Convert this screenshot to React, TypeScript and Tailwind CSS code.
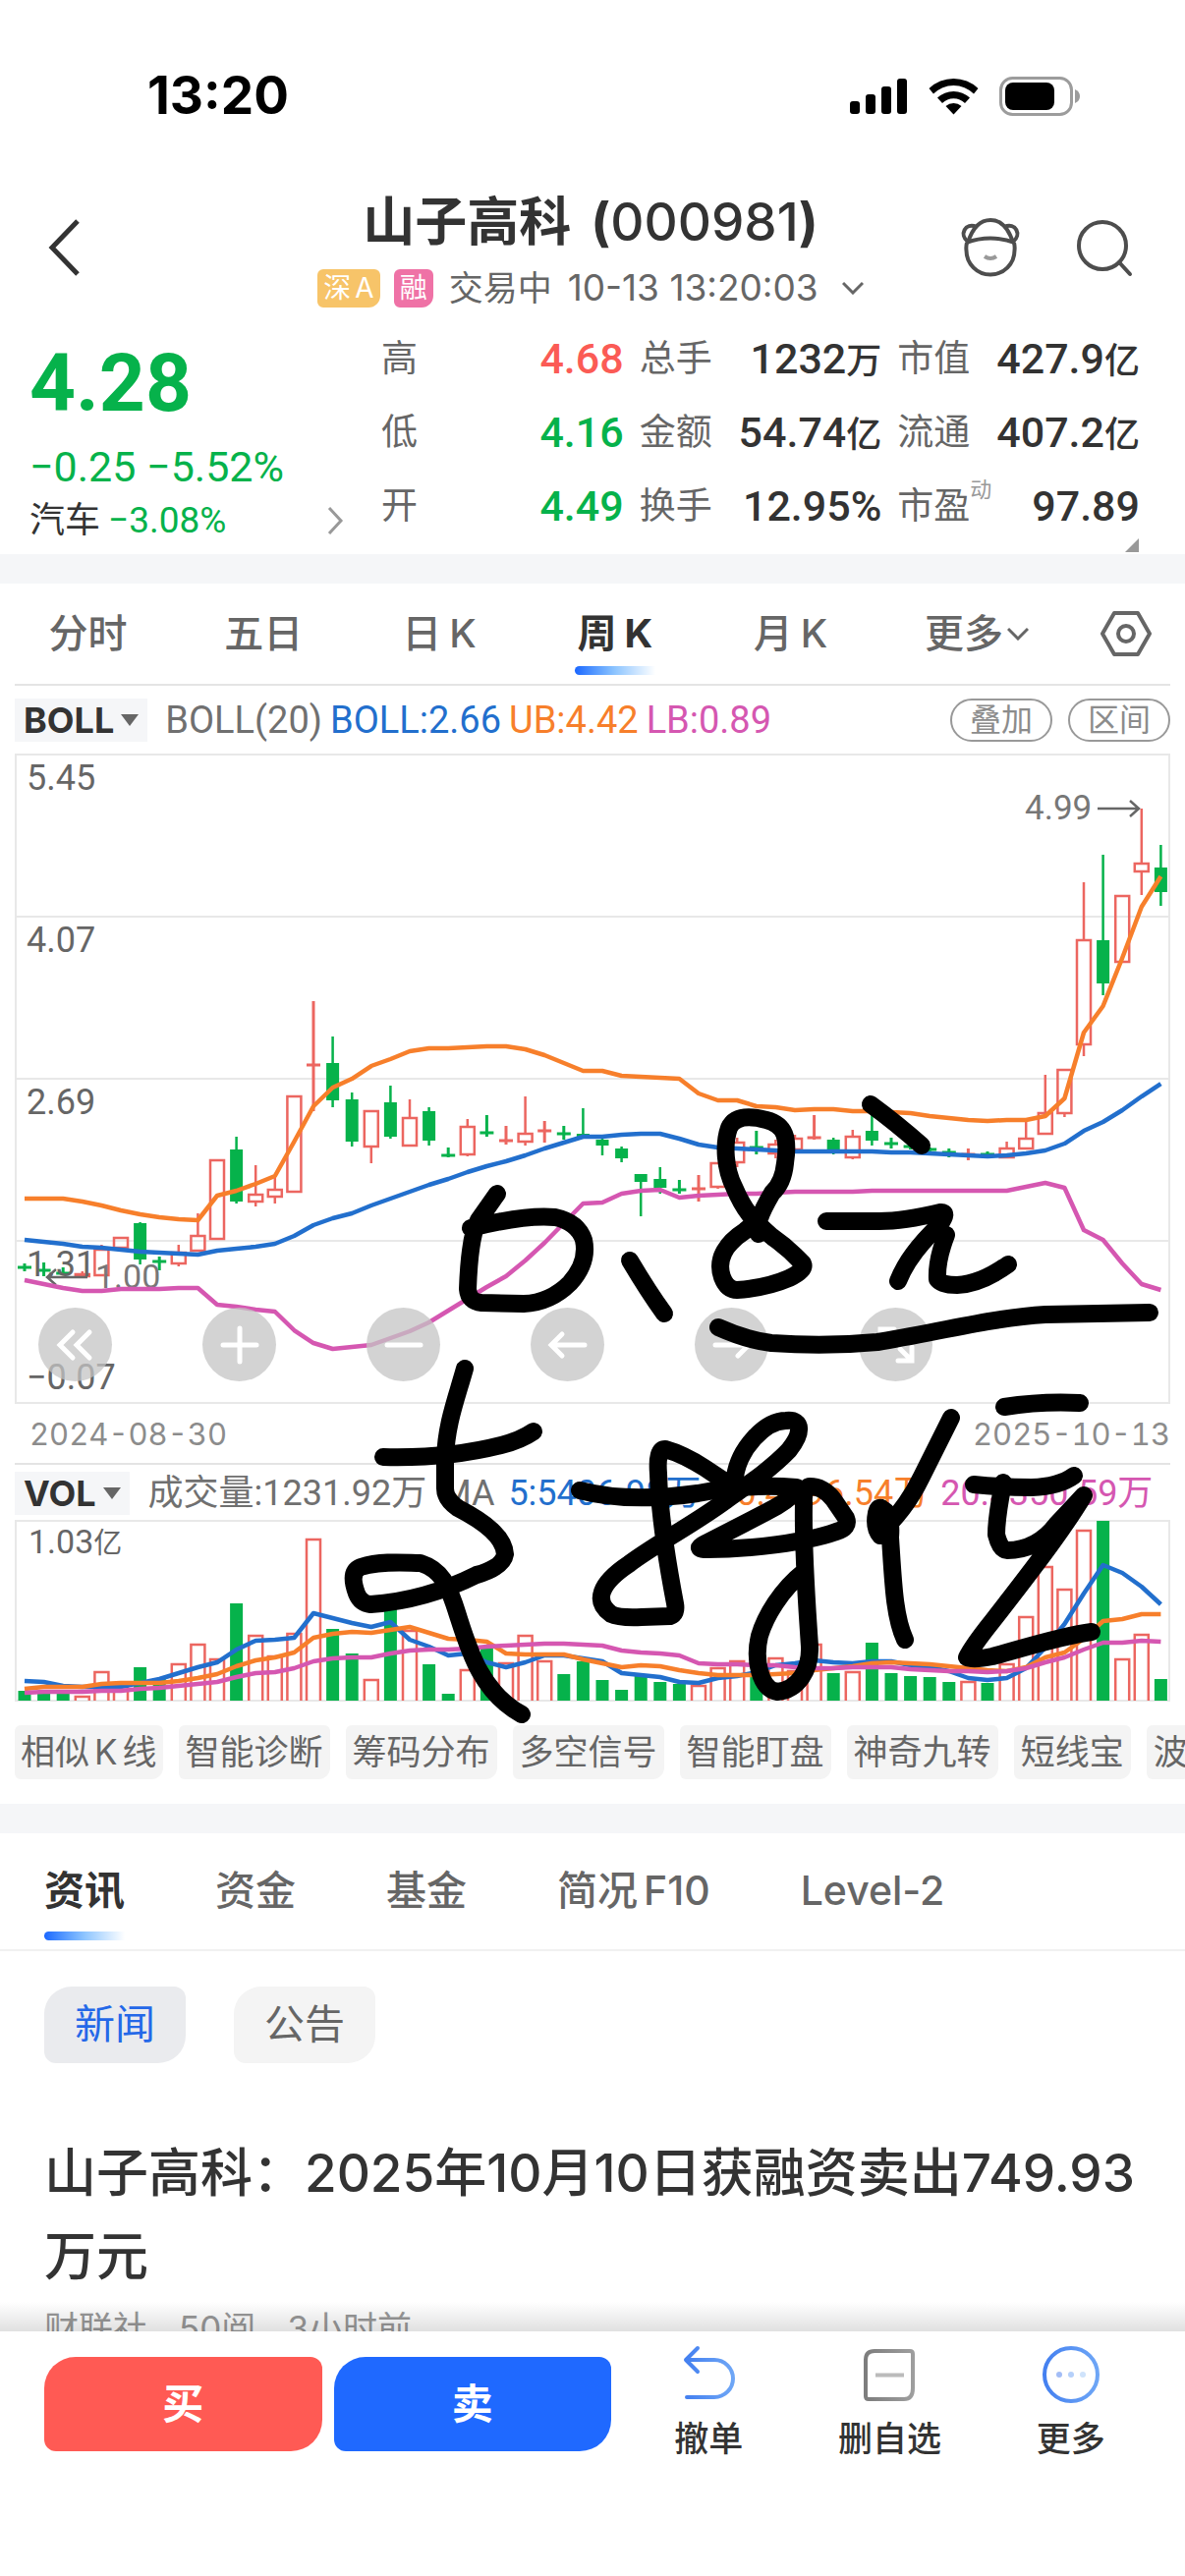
import type { ReactNode } from "react";

type Tone = "up" | "down";

// [tone, high, bodyTop, bodyBottom, low]; equal body values draw a doji
type Candle = [Tone, number, number, number, number];

const UP = "#ec6660";
const DOWN = "#06b24b";
const BLUE = "#226fcd";
const ORANGE = "#f77f2b";
const PINK = "#d557b1";

const FONT = "font-[Roboto,'Noto_Sans_CJK_SC',sans-serif]";
const FONT_WIDE = "font-[Inter,'Noto_Sans_CJK_SC',sans-serif]";

const candles: Candle[] = [
  ["down", 1286, 1290, 1290, 1294],
  ["down", 1285, 1293, 1293, 1299],
  ["down", 1290, 1296, 1296, 1298],
  ["up", 1294, 1297, 1299, 1299],
  ["up", 1267, 1272, 1298, 1298],
  ["up", 1260, 1260, 1270, 1270],
  ["down", 1244, 1245, 1282, 1287],
  ["down", 1279, 1284, 1284, 1293],
  ["up", 1267, 1275, 1286, 1289],
  ["up", 1235, 1258, 1273, 1273],
  ["up", 1181, 1181, 1261, 1261],
  ["down", 1157, 1170, 1223, 1225],
  ["up", 1186, 1216, 1223, 1228],
  ["up", 1198, 1211, 1218, 1225],
  ["up", 1116, 1116, 1213, 1213],
  ["up", 1019, 1084, 1084, 1131],
  ["down", 1055, 1082, 1120, 1127],
  ["down", 1112, 1119, 1162, 1167],
  ["up", 1131, 1131, 1167, 1184],
  ["down", 1105, 1122, 1157, 1159],
  ["up", 1119, 1138, 1166, 1166],
  ["down", 1127, 1131, 1161, 1166],
  ["down", 1168, 1176, 1176, 1178],
  ["up", 1139, 1147, 1175, 1177],
  ["down", 1135, 1153, 1153, 1157],
  ["up", 1146, 1161, 1161, 1165],
  ["up", 1116, 1154, 1162, 1166],
  ["up", 1141, 1151, 1151, 1163],
  ["down", 1146, 1154, 1154, 1160],
  ["down", 1128, 1154, 1158, 1158],
  ["down", 1159, 1160, 1166, 1176],
  ["down", 1167, 1169, 1179, 1183],
  ["down", 1195, 1195, 1203, 1238],
  ["down", 1188, 1200, 1209, 1215],
  ["down", 1201, 1211, 1211, 1215],
  ["up", 1196, 1210, 1210, 1223],
  ["up", 1184, 1184, 1208, 1210],
  ["up", 1158, 1163, 1183, 1188],
  ["down", 1151, 1168, 1168, 1175],
  ["up", 1160, 1165, 1174, 1179],
  ["up", 1155, 1159, 1170, 1170],
  ["up", 1135, 1158, 1158, 1160],
  ["down", 1158, 1160, 1170, 1175],
  ["up", 1150, 1157, 1178, 1180],
  ["down", 1135, 1151, 1161, 1166],
  ["down", 1158, 1164, 1164, 1169],
  ["down", 1165, 1167, 1167, 1170],
  ["down", 1168, 1170, 1170, 1173],
  ["down", 1169, 1173, 1173, 1178],
  ["up", 1169, 1175, 1175, 1181],
  ["down", 1172, 1175, 1175, 1179],
  ["up", 1162, 1169, 1178, 1178],
  ["up", 1142, 1159, 1169, 1169],
  ["up", 1094, 1133, 1154, 1154],
  ["up", 1089, 1089, 1133, 1137],
  ["up", 898, 957, 1063, 1075],
  ["down", 870, 957, 1001, 1013],
  ["up", 912, 912, 979, 979],
  ["up", 823, 879, 887, 911],
  ["down", 860, 883, 908, 922],
];

const upperBand = [
  1220, 1220, 1220, 1223, 1227, 1232, 1236, 1239, 1241, 1242, 1217, 1212, 1205, 1197, 1162, 1126, 1107,
  1098, 1085, 1078, 1070, 1067, 1067, 1066, 1065, 1065, 1068, 1074, 1082, 1090, 1090, 1095, 1096, 1097,
  1098, 1113, 1120, 1120, 1126, 1127, 1130, 1129, 1129, 1131, 1131, 1132, 1133, 1136, 1138, 1140, 1141,
  1140, 1140, 1136, 1118, 1051, 1024, 975, 923, 892,
];

const midBand = [
  1262, 1264, 1266, 1269, 1270, 1272, 1274, 1275, 1276, 1277, 1273, 1271, 1269, 1266, 1258, 1247, 1240,
  1235, 1227, 1220, 1213, 1206, 1200, 1193, 1187, 1182, 1176, 1169, 1163, 1157, 1157, 1155, 1154, 1154,
  1159, 1165, 1168, 1169, 1170, 1171, 1172, 1172, 1172, 1172, 1172, 1173, 1173, 1174, 1175, 1176, 1177,
  1176, 1174, 1171, 1164, 1151, 1142, 1130, 1116, 1103,
];

const lowerBand = [
  1303, 1307, 1311, 1314, 1314, 1312, 1312, 1312, 1311, 1311, 1328, 1330, 1333, 1335, 1354, 1367, 1373,
  1371, 1369, 1362, 1355, 1346, 1334, 1322, 1310, 1299, 1283, 1265, 1245, 1225, 1224, 1215, 1212, 1211,
  1219, 1217, 1216, 1215, 1215, 1214, 1213, 1213, 1213, 1213, 1212, 1212, 1212, 1212, 1212, 1212, 1212,
  1212, 1208, 1204, 1209, 1252, 1262, 1286, 1307, 1313,
];

const volumeTops = [
  1721, 1723, 1723, 1727, 1702, 1717, 1697, 1708, 1694, 1674, 1689, 1632, 1665, 1686, 1663, 1567, 1658,
  1683, 1710, 1638, 1660, 1694, 1724, 1700, 1678, 1693, 1665, 1691, 1704, 1691, 1710, 1720, 1706, 1712,
  1714, 1716, 1698, 1691, 1703, 1688, 1701, 1674, 1703, 1702, 1672, 1703, 1706, 1707, 1712, 1712, 1713,
  1694, 1646, 1595, 1618, 1558, 1548, 1689, 1664, 1709,
];

const ma5 = [
  1711, 1712, 1716, 1717, 1717, 1717, 1713, 1709, 1703, 1697, 1692, 1679, 1670, 1669, 1667, 1642, 1647,
  1652, 1656, 1651, 1669, 1676, 1685, 1683, 1692, 1697, 1692, 1685, 1685, 1688, 1691, 1703, 1705, 1707,
  1712, 1713, 1708, 1706, 1702, 1695, 1693, 1690, 1692, 1693, 1691, 1691, 1695, 1697, 1701, 1708, 1710,
  1708, 1698, 1677, 1653, 1622, 1593, 1601, 1615, 1633,
];

const ma10 = [
  1719, 1717, 1717, 1717, 1714, 1713, 1713, 1713, 1711, 1708, 1704, 1696, 1690, 1687, 1682, 1667, 1663,
  1661, 1662, 1659, 1656, 1662, 1668, 1669, 1671, 1683, 1684, 1684, 1684, 1689, 1693, 1697, 1695, 1696,
  1700, 1703, 1705, 1705, 1705, 1704, 1703, 1700, 1698, 1696, 1693, 1692, 1693, 1694, 1696, 1698, 1700,
  1701, 1697, 1687, 1682, 1668, 1650, 1648, 1643, 1643,
];

const ma20 = [
  1723, 1722, 1722, 1722, 1721, 1721, 1719, 1718, 1716, 1714, 1712, 1707, 1703, 1702, 1698, 1691, 1688,
  1687, 1687, 1683, 1680, 1679, 1679, 1678, 1676, 1675, 1674, 1673, 1673, 1674, 1675, 1680, 1682, 1683,
  1685, 1693, 1694, 1694, 1695, 1695, 1697, 1698, 1698, 1697, 1697, 1697, 1699, 1700, 1701, 1701, 1702,
  1701, 1698, 1692, 1687, 1679, 1672, 1672, 1670, 1671,
];

const xAt = (i: number) => 25 + i * 19.6;
const toPoints = (values: number[]) => values.map((y, i) => `${xAt(i)},${y}`).join(" ");

const periods = [
  { id: "time", label: "分时" },
  { id: "five", label: "五日" },
  { id: "day", label: "日", suffix: "K" },
  { id: "week", label: "周", suffix: "K", active: true },
  { id: "month", label: "月", suffix: "K" },
];

const tools = ["智能诊断", "筹码分布", "多空信号", "智能盯盘", "神奇九转", "短线宝", "波"];

const Line = ({ values, color }: { values: number[]; color: string }) => (
  <polyline points={toPoints(values)} fill="none" stroke={color} strokeWidth="4.5" strokeLinejoin="round" />
);

const StatusBar = () => (
  <div className="flex h-[196px] items-center justify-between pl-[150px] pr-[106px]">
    <p className="font-[Inter,sans-serif] text-[53px] font-bold text-black">13:20</p>
    <div className="flex items-center gap-[21px]">
      <svg width="59" height="38" viewBox="0 0 59 38">
        <rect x="0" y="24" width="10" height="13" rx="3" />
        <rect x="16" y="17" width="10" height="20" rx="3" />
        <rect x="32" y="9" width="10" height="28" rx="3" />
        <rect x="48" y="1" width="10" height="36" rx="3" />
      </svg>
      <svg width="51" height="38" viewBox="0 0 51 38">
        <path d="M0.5 11 A36 36 0 0 1 50.5 11 L46 16.5 A29 29 0 0 0 5 16.5 Z" />
        <path d="M9 20.500 A24 24 0 0 1 42 20.500 L37 26 A16.500 16.500 0 0 0 14 26 Z" />
        <path d="M17.500 29 A12 12 0 0 1 33.500 29 L25.500 37.500 Z" />
      </svg>
      <svg width="83" height="40" viewBox="0 0 83 40">
        <rect x="1.500" y="1.500" width="72" height="37" rx="12" fill="none" stroke="#9c9c9c" strokeWidth="3" />
        <rect x="6" y="6" width="50" height="28" rx="8" />
        <path d="M77 13 Q82 15 82 20 Q82 25 77 27 Z" fill="#9c9c9c" />
      </svg>
    </div>
  </div>
);

const Header = () => (
  <header className="flex h-[132px] items-start justify-between pl-[48px] pr-[52px]">
    <button aria-label="返回" className="flex h-[112px] w-[176px] items-center">
      <svg width="34" height="58" viewBox="0 0 34 58" fill="none" stroke="#333" strokeWidth="5">
        <path d="M31 2 L5 29 L31 56" />
      </svg>
    </button>
    <div className="flex flex-col items-center">
      <h1 className={`${FONT_WIDE} flex h-[62px] items-center gap-[20px] text-[53px] font-bold text-[#333]`}>
        <span>山子高科</span>
        <span>
          (<span className="font-medium">000981</span>)
        </span>
      </h1>
      <div className={`${FONT_WIDE} flex h-[70px] items-center text-[35px] text-[#666]`}>
        <span className="mr-[14px] flex h-[39px] items-center gap-1 rounded-[6px] rounded-br-[12px] bg-[#f7c469] px-[6px] text-[28px] text-white">
          深<span>A</span>
        </span>
        <span className="mr-[16px] flex h-[39px] items-center rounded-[6px] rounded-br-[12px] bg-[#ef72a6] px-[6px] text-[28px] text-white">
          融
        </span>
        <span className="mr-[16px]">交易中</span>
        <time className="text-[37px]">10-13 13:20:03</time>
        <svg className="ml-[24px]" width="22" height="14" viewBox="0 0 22 14" fill="none" stroke="#666" strokeWidth="3">
          <path d="M1 2 L11 12 L21 2" />
        </svg>
      </div>
    </div>
    <div className="flex h-[112px] w-[176px] items-center justify-between">
      <button aria-label="智能助手">
        <svg width="60" height="60" viewBox="0 0 60 60" fill="none" stroke="#4d4d4d" strokeWidth="4">
          <path d="M6 25 Q5 29 5.500 33 A24.500 24.500 0 0 0 54.500 33 Q55 29 54 25" />
          <path d="M5 25 Q30 16 55 25" />
          <path d="M7 25 C12 9 20 2 30 2 C40 2 48 9 53 25" />
          <path d="M7 24 C-2 17 4 4 16 9" />
          <path d="M53 24 C62 17 56 4 44 9" />
          <path d="M24 39 Q30 43 36 39" stroke="#999" />
        </svg>
      </button>
      <button aria-label="搜索">
        <svg width="60" height="60" viewBox="0 0 60 60" fill="none" stroke="#4d4d4d" strokeWidth="4">
          <circle cx="28" cy="28" r="24" />
          <path d="M45 45 L56 57" strokeLinecap="round" />
        </svg>
      </button>
    </div>
  </header>
);

interface StatProps {
  label: string;
  value: string;
  unit?: string;
  note?: string;
  color?: string;
}

const Stat = ({ label, value, unit, note, color = "text-[#333]" }: StatProps) => (
  <div className="flex h-[75px] items-center justify-between">
    <dt className="relative text-[37px] text-[#666]">
      {label}
      {note && <sup className="absolute left-full top-0 text-[22px] leading-none text-[#999]">{note}</sup>}
    </dt>
    <dd className={`flex items-baseline text-[43px] font-medium ${color}`}>
      {value}
      {unit && <span className="text-[36px]">{unit}</span>}
    </dd>
  </div>
);

const Quote = () => (
  <section className={`${FONT} relative flex h-[236px] pl-[30px] pr-[46px]`}>
    <div className="w-[320px] text-[#06b24b]">
      <p className="h-[122px] text-[82px] font-bold leading-[124px]">4.28</p>
      <p className="h-[50px] whitespace-nowrap text-[43px] leading-[50px]">−0.25 −5.52%</p>
      <button className="flex h-[60px] w-full items-center text-[36px]">
        <span className="mr-2 text-[#333]">汽车</span>
        <span className="text-[37px]">−3.08%</span>
        <svg className="ml-auto" width="17" height="28" viewBox="0 0 17 28" fill="none" stroke="#999" strokeWidth="3">
          <path d="M2 1 L14 14 L2 27" />
        </svg>
      </button>
    </div>
    <dl className="ml-[38px] grid flex-1 grid-cols-3 gap-x-4 self-start">
      <Stat label="高" value="4.68" color="text-[#fb5b55]" />
      <Stat label="总手" value="1232" unit="万" />
      <Stat label="市值" value="427.9" unit="亿" />
      <Stat label="低" value="4.16" color="text-[#06b24b]" />
      <Stat label="金额" value="54.74" unit="亿" />
      <Stat label="流通" value="407.2" unit="亿" />
      <Stat label="开" value="4.49" color="text-[#06b24b]" />
      <Stat label="换手" value="12.95%" />
      <Stat label="市盈" note="动" value="97.89" />
    </dl>
    <svg className="absolute bottom-[2px] right-[47px]" width="14" height="14" viewBox="0 0 14 14">
      <path d="M14 0 V14 H0 Z" fill="#999" />
    </svg>
  </section>
);

const Underline = () => (
  <span className="absolute inset-x-0 bottom-[9px] mx-auto h-[9px] w-[82px] rounded-l-full bg-linear-to-r from-[#1a66ff] via-[#8ec5ff] to-white" />
);

const PeriodTabs = () => (
  <nav className={`${FONT_WIDE} flex h-[102px] items-center pr-[34px] text-[40px] font-medium text-[#666]`}>
    {periods.map((p) => (
      <button
        key={p.id}
        className={`relative flex h-full flex-1 items-center justify-center gap-2 ${p.active ? "font-bold text-[#333]" : ""}`}
      >
        {p.label}
        {p.suffix && <span>{p.suffix}</span>}
        {p.active && <Underline />}
      </button>
    ))}
    <button className="flex h-full w-[200px] items-center justify-center gap-1">
      更多
      <svg width="22" height="14" viewBox="0 0 22 14" fill="none" stroke="#666" strokeWidth="3">
        <path d="M1 2 L11 12 L21 2" />
      </svg>
    </button>
    <button aria-label="图表设置" className="ml-[26px]">
      <svg width="52" height="46" viewBox="0 0 52 46" fill="none" stroke="#666" strokeWidth="4">
        <path d="M14 2 H38 L50 23 L38 44 H14 L2 23 Z" strokeLinejoin="round" />
        <circle cx="26" cy="23" r="8" />
      </svg>
    </button>
  </nav>
);

const IndicatorButton = ({ children }: { children: ReactNode }) => (
  <button className="flex h-[44px] items-center gap-[7px] bg-[#f5f6f8] px-[9px] font-[Inter,sans-serif] text-[36px] font-bold text-[#333]">
    {children}
    <svg width="18" height="12" viewBox="0 0 18 12">
      <path d="M0 0 H18 L9 12 Z" fill="#666" />
    </svg>
  </button>
);

const PriceChart = () => (
  <svg viewBox="15 768 1176 660" className={`${FONT} block w-full overflow-visible text-[36px]`}>
    <g fill="none" stroke="#e8e8e8" strokeWidth="2">
      <rect x="16" y="768" width="1174" height="660" />
      <path d="M16 933 H1190 M16 1098 H1190 M16 1263 H1190" />
    </g>
    {candles.map(([tone, high, top, bottom, low], i) => {
      const x = xAt(i);
      const color = tone === "up" ? UP : DOWN;
      if (top === bottom) {
        return (
          <path key={i} d={`M${x} ${high} V${low} M${x - 7} ${top} H${x + 7}`} stroke={color} strokeWidth="3" />
        );
      }
      return (
        <g key={i} stroke={color} strokeWidth="2.5">
          <path d={`M${x} ${high} V${top} M${x} ${bottom} V${low}`} />
          {tone === "up" ? (
            <rect x={x - 7} y={top} width="14" height={bottom - top} fill="none" />
          ) : (
            <rect x={x - 6.500} y={top} width="13" height={bottom - top} fill={color} stroke="none" />
          )}
        </g>
      );
    })}
    <g fill="#666">
      <text x="27" y="804">5.45</text>
      <text x="27" y="969">4.07</text>
      <text x="27" y="1134">2.69</text>
      <text x="27" y="1299">1.31</text>
      <text x="27" y="1414">−0.07</text>
      <text x="97" y="1311" fill="#777" fontSize="34">1.00</text>
      <text x="1043" y="834" fill="#777" fontSize="35">4.99</text>
    </g>
    <g fill="none" stroke="#666" strokeWidth="2.5">
      <path d="M89 1300 H48 M57 1292 L48 1300 L57 1308" />
      <path d="M1117 823 H1159 M1150 815 L1159 823 L1150 831" />
    </g>
    <Line values={upperBand} color={ORANGE} />
    <Line values={midBand} color={BLUE} />
    <Line values={lowerBand} color={PINK} />
  </svg>
);

const VolumeChart = () => (
  <svg viewBox="15 1548 1176 183" className={`${FONT} block w-full overflow-visible`}>
    <rect x="16" y="1548" width="1174" height="183" fill="none" stroke="#e8e8e8" strokeWidth="2" />
    <text x="29" y="1581" fontSize="34" fill="#666">
      1.03<tspan fontSize="29">亿</tspan>
    </text>
    {volumeTops.map((top, i) =>
      candles[i][0] === "down" ? (
        <rect key={i} x={xAt(i) - 6.500} y={top} width="13" height={1731 - top} fill={DOWN} />
      ) : (
        <path
          key={i}
          d={`M${xAt(i) - 7} 1731 V${top} H${xAt(i) + 7} V1731`}
          fill="none"
          stroke={UP}
          strokeWidth="2.5"
        />
      ),
    )}
    <Line values={ma5} color={BLUE} />
    <Line values={ma10} color={ORANGE} />
    <Line values={ma20} color={PINK} />
  </svg>
);

const RoundButton = ({ label, d }: { label: string; d: string }) => (
  <button
    aria-label={label}
    className="flex size-[75px] items-center justify-center rounded-full bg-[#c4c4c4]/75"
  >
    <svg width="44" height="44" viewBox="0 0 44 44" fill="none" stroke="#fff" strokeWidth="5" strokeLinecap="round">
      <path d={d} />
    </svg>
  </button>
);

const ChartControls = () => (
  <div className="absolute bottom-[22px] left-[24px] flex gap-[92px]">
    <RoundButton label="收起" d="M19 9 L6 22 L19 35 M36 9 L23 22 L36 35" />
    <RoundButton label="放大" d="M22 5 V39 M5 22 H39" />
    <RoundButton label="缩小" d="M5 22 H39" />
    <RoundButton label="左移" d="M39 22 H6 M16 11 L5 22 L16 33" />
    <RoundButton label="右移" d="M5 22 H38 M28 11 L39 22 L28 33" />
    <RoundButton label="全屏" d="M6 20 V6 H20 M38 24 V38 H24 M26 26 L36 36 M8 8 L16 16" />
  </div>
);

// Hand drawn note: 0.8元支持位
const Scribble = () => (
  <svg
    viewBox="0 696 1206 1062"
    className="pointer-events-none absolute inset-x-0 top-0 w-full"
    fill="none"
    stroke="#000"
    strokeWidth="18"
    strokeLinecap="round"
    strokeLinejoin="round"
  >
    <path d="M506 1215 L487 1242 Q478 1258 476 1312 Q477 1325 490 1326 L533 1327 Q560 1326 580 1306 Q599 1285 594 1262 Q588 1244 565 1239 Q535 1236 479 1250" />
    <path d="M641 1283 Q660 1315 676 1337" />
    <path d="M772 1256 Q766 1248 786 1214 Q797 1204 799 1184 C803 1158 799 1145 780 1140 C765 1136 748 1135 742 1148 C736 1165 738 1190 747 1208 C757 1232 766 1242 786 1259 Q802 1270 817 1286 Q820 1293 803 1301 Q780 1311 750 1313 Q740 1313 735 1300 C728 1280 741 1264 758 1253 Q766 1247 774 1238" />
    <path d="M886 1124 Q912 1143 938 1166" />
    <path d="M841 1243 H895 Q920 1243 957 1234 Q966 1233 956 1247 Q925 1276 914 1304" />
    <path d="M963 1257 Q953 1283 954 1302 Q958 1308 974 1308 Q998 1307 1026 1287" />
    <path d="M731 1351 Q760 1364 785 1367 Q840 1371 893 1366 C950 1357 1010 1341 1064 1338 L1170 1336" />
    <path d="M473 1393 C464 1425 454 1450 453 1485 V1515 Q453 1526 466 1535 C495 1550 513 1565 514 1582 Q512 1595 485 1603 C455 1618 420 1630 377 1633 Q367 1632 363 1622 Q355 1600 367 1595 C390 1588 415 1591 428 1591 C450 1598 456 1615 462 1632 C475 1670 485 1720 531 1745" />
    <path d="M390 1483 C430 1484 475 1480 510 1471 Q530 1466 543 1457" />
    <path d="M590 1517 Q640 1530 710 1520 Q760 1510 811 1514 Q808 1525 780 1539 L718 1571 Q705 1577 720 1577 C765 1577 820 1570 851 1559 Q865 1555 861 1545 L848 1526 Q838 1513 824 1513 Q817 1515 818 1530 C817 1580 821 1630 824 1676 C825 1700 812 1720 791 1722 C774 1720 767 1690 773 1665 C779 1645 795 1618 818 1600" />
    <path d="M748 1503 C752 1475 778 1446 800 1446 C818 1444 816 1460 803 1476 C785 1495 760 1512 735 1530 C700 1555 665 1573 640 1592 C610 1612 604 1630 622 1643 Q630 1647 653 1646 L682 1645 Q689 1643 687 1632 C679 1590 671 1540 670 1500 Q668 1475 677 1475 Q695 1480 717 1494 L738 1508" />
    <path d="M968 1443 L938 1503 Q925 1530 906 1550 L896 1563 Q889 1555 892 1540 Q894 1532 898 1536 Q908 1540 906 1565 C909 1610 910 1645 921 1669" />
    <path d="M1022 1432 Q1060 1426 1099 1428" />
    <path d="M991 1511 Q1020 1514 1050 1514 Q1078 1513 1093 1502" />
    <path d="M1021 1509 Q1014 1545 1014 1562 Q1018 1578 1025 1578 C1050 1578 1065 1565 1075 1552 L1103 1522 C1080 1560 1045 1605 1010 1650 Q990 1675 984 1687 Q990 1690 1010 1686 C1040 1678 1080 1665 1111 1661" />
  </svg>
);

const ChartSection = () => (
  <section className={`${FONT} relative`}>
    <div className="mx-[15px]">
      <div className="flex h-[72px] items-center border-t-2 border-[#e4e4e4] text-[38px]">
        <IndicatorButton>BOLL</IndicatorButton>
        <p className="ml-[18px] flex gap-[8px]">
          <span className="text-[#707070]">BOLL(20)</span>
          <span className="text-[#226fcd]">BOLL:2.66</span>
          <span className="text-[#f77f2b]">UB:4.42</span>
          <span className="text-[#d557b1]">LB:0.89</span>
        </p>
        <div className="ml-auto flex gap-[16px] text-[32px] text-[#8c8c8c]">
          <button className="flex h-[44px] w-[104px] items-center justify-center rounded-full border-2 border-[#999]">
            叠加
          </button>
          <button className="flex h-[44px] w-[104px] items-center justify-center rounded-full border-2 border-[#999]">
            区间
          </button>
        </div>
      </div>
      <div className="relative">
        <PriceChart />
        <ChartControls />
      </div>
      <div
        className={`${FONT_WIDE} flex h-[61px] items-center justify-between pl-[15px] pt-1 text-[31px] tabular-nums text-[#8c8c8c]`}
      >
        <time>2024-08-30</time>
        <time>2025-10-13</time>
      </div>
      <div className="flex h-[59px] items-center whitespace-nowrap border-t-2 border-[#e4e4e4] text-[36px]">
        <IndicatorButton>VOL</IndicatorButton>
        <p className="ml-[19px] flex text-[#707070]">
          <span className="mr-[14px]">成交量:1231.92万</span>
          <span className="mr-[14px]">MA</span>
          <span className="mr-[16px] text-[#226fcd]">5:5406.98万</span>
          <span className="mr-[12px] text-[#f77f2b]">10:4996.54万</span>
          <span className="text-[#d557b1]">20:3350.59万</span>
        </p>
      </div>
      <VolumeChart />
    </div>
    <Scribble />
  </section>
);

const ToolRow = () => (
  <div
    className={`${FONT_WIDE} my-[25px] ml-[15px] flex gap-[16px] overflow-hidden whitespace-nowrap text-[35px] text-[#666]`}
  >
    <button className="flex h-[55px] shrink-0 items-center gap-[5px] rounded-[6px] rounded-br-[12px] bg-[#f4f4f4] px-[6px]">
      相似<span>K</span>线
    </button>
    {tools.map((tool) => (
      <button
        key={tool}
        className="h-[55px] shrink-0 rounded-[6px] rounded-br-[12px] bg-[#f4f4f4] px-[7px] leading-[55px]"
      >
        {tool}
      </button>
    ))}
  </div>
);

const NewsSection = () => (
  <section className={FONT_WIDE}>
    <nav className="flex h-[120px] items-center gap-[92px] border-b-2 border-[#f1f1f1] pl-[45px] text-[41px] font-medium text-[#666]">
      <button className="relative h-full font-bold text-[#333]">
        资讯
        <Underline />
      </button>
      <button>资金</button>
      <button>基金</button>
      <button className="flex gap-[6px]">
        简况<span>F10</span>
      </button>
      <button>Level-2</button>
    </nav>
    <div className="mt-[36px] flex gap-[49px] pl-[45px] text-[41px]">
      <button className="h-[78px] w-[144px] rounded-[28px_12px_28px_12px] bg-[#eaebee] text-[#2468e8]">新闻</button>
      <button className="h-[78px] w-[144px] rounded-[28px_12px_28px_12px] bg-[#f4f4f4] text-[#666]">公告</button>
    </div>
    <article className="mt-[70px] px-[45px]">
      <a href="#news" className="block text-[53px] font-medium leading-[85px] text-[#333]">
        山子高科：2025年10月10日获融资卖出749.93万元
      </a>
      <p className="mt-[5px] flex gap-[32px] text-[35px] leading-[50px] text-[#999]">
        <span>财联社</span>
        <span>50阅</span>
        <span>3小时前</span>
      </p>
    </article>
  </section>
);

const FooterAction = ({ label, children }: { label: string; children: ReactNode }) => (
  <button className="flex flex-1 flex-col items-center gap-[16px]">
    <svg width="60" height="60" viewBox="0 0 60 60" fill="none" strokeWidth="4">
      {children}
    </svg>
    <span className="text-[35px] font-medium leading-[44px] text-[#333]">{label}</span>
  </button>
);

const Footer = () => (
  <footer className={`${FONT} relative flex h-[249px] shrink-0 items-start bg-white pl-[45px] pr-[24px] pt-[13px]`}>
    <div className="pointer-events-none absolute inset-x-0 bottom-full h-[30px] bg-linear-to-b from-transparent to-black/12" />
    <div className="mt-[13px] flex w-[577px] gap-[12px] text-[42px] font-bold text-white">
      <button className="h-[96px] flex-1 rounded-[32px_12px_32px_12px] bg-[#ff5a54]">买</button>
      <button className="h-[96px] flex-1 rounded-[32px_12px_32px_12px] bg-[#1f69ff]">卖</button>
    </div>
    <div className="ml-[7px] flex flex-1">
      <FooterAction label="撤单">
        <defs>
          <linearGradient id="action-blue" x1="0" x2="1">
            <stop offset="0" stopColor="#4480f0" />
            <stop offset="1" stopColor="#6ea6f6" />
          </linearGradient>
          <linearGradient id="action-gray" x1="0" x2="1">
            <stop offset="0" stopColor="#7d7d7d" />
            <stop offset="1" stopColor="#9e9e9e" />
          </linearGradient>
        </defs>
        <path
          d="M19 4 L7 16 L19 28 M7 16 H36 A19 19 0 0 1 36 54 H8"
          stroke="url(#action-blue)"
          strokeLinejoin="round"
          strokeLinecap="round"
        />
      </FooterAction>
      <FooterAction label="删自选">
        <path
          d="M15 7 H51 Q54 7 54 10 V45 Q54 56 45 56 H9 Q6 56 6 53 V16 Q6 7 15 7 Z"
          stroke="url(#action-gray)"
        />
        <path d="M16 31.500 H45" stroke="#bbb" />
      </FooterAction>
      <FooterAction label="更多">
        <circle cx="30" cy="31" r="27" stroke="url(#action-blue)" />
        <circle cx="18" cy="31" r="3" fill="#a3bdf6" />
        <circle cx="30" cy="31" r="3" fill="#b5d0fa" />
        <circle cx="42" cy="31" r="3" fill="#cfe3fb" />
      </FooterAction>
    </div>
  </footer>
);

const App = () => {
  return (
    <div className="flex h-screen flex-col overflow-hidden bg-white">
      <main className="min-h-0 flex-1 overflow-hidden">
        <StatusBar />
        <Header />
        <Quote />
        <div className="h-[30px] bg-[#f5f6f8]" />
        <PeriodTabs />
        <ChartSection />
        <ToolRow />
        <div className="h-[30px] bg-[#f5f6f8]" />
        <NewsSection />
      </main>
      <Footer />
    </div>
  );
};

export default App;
